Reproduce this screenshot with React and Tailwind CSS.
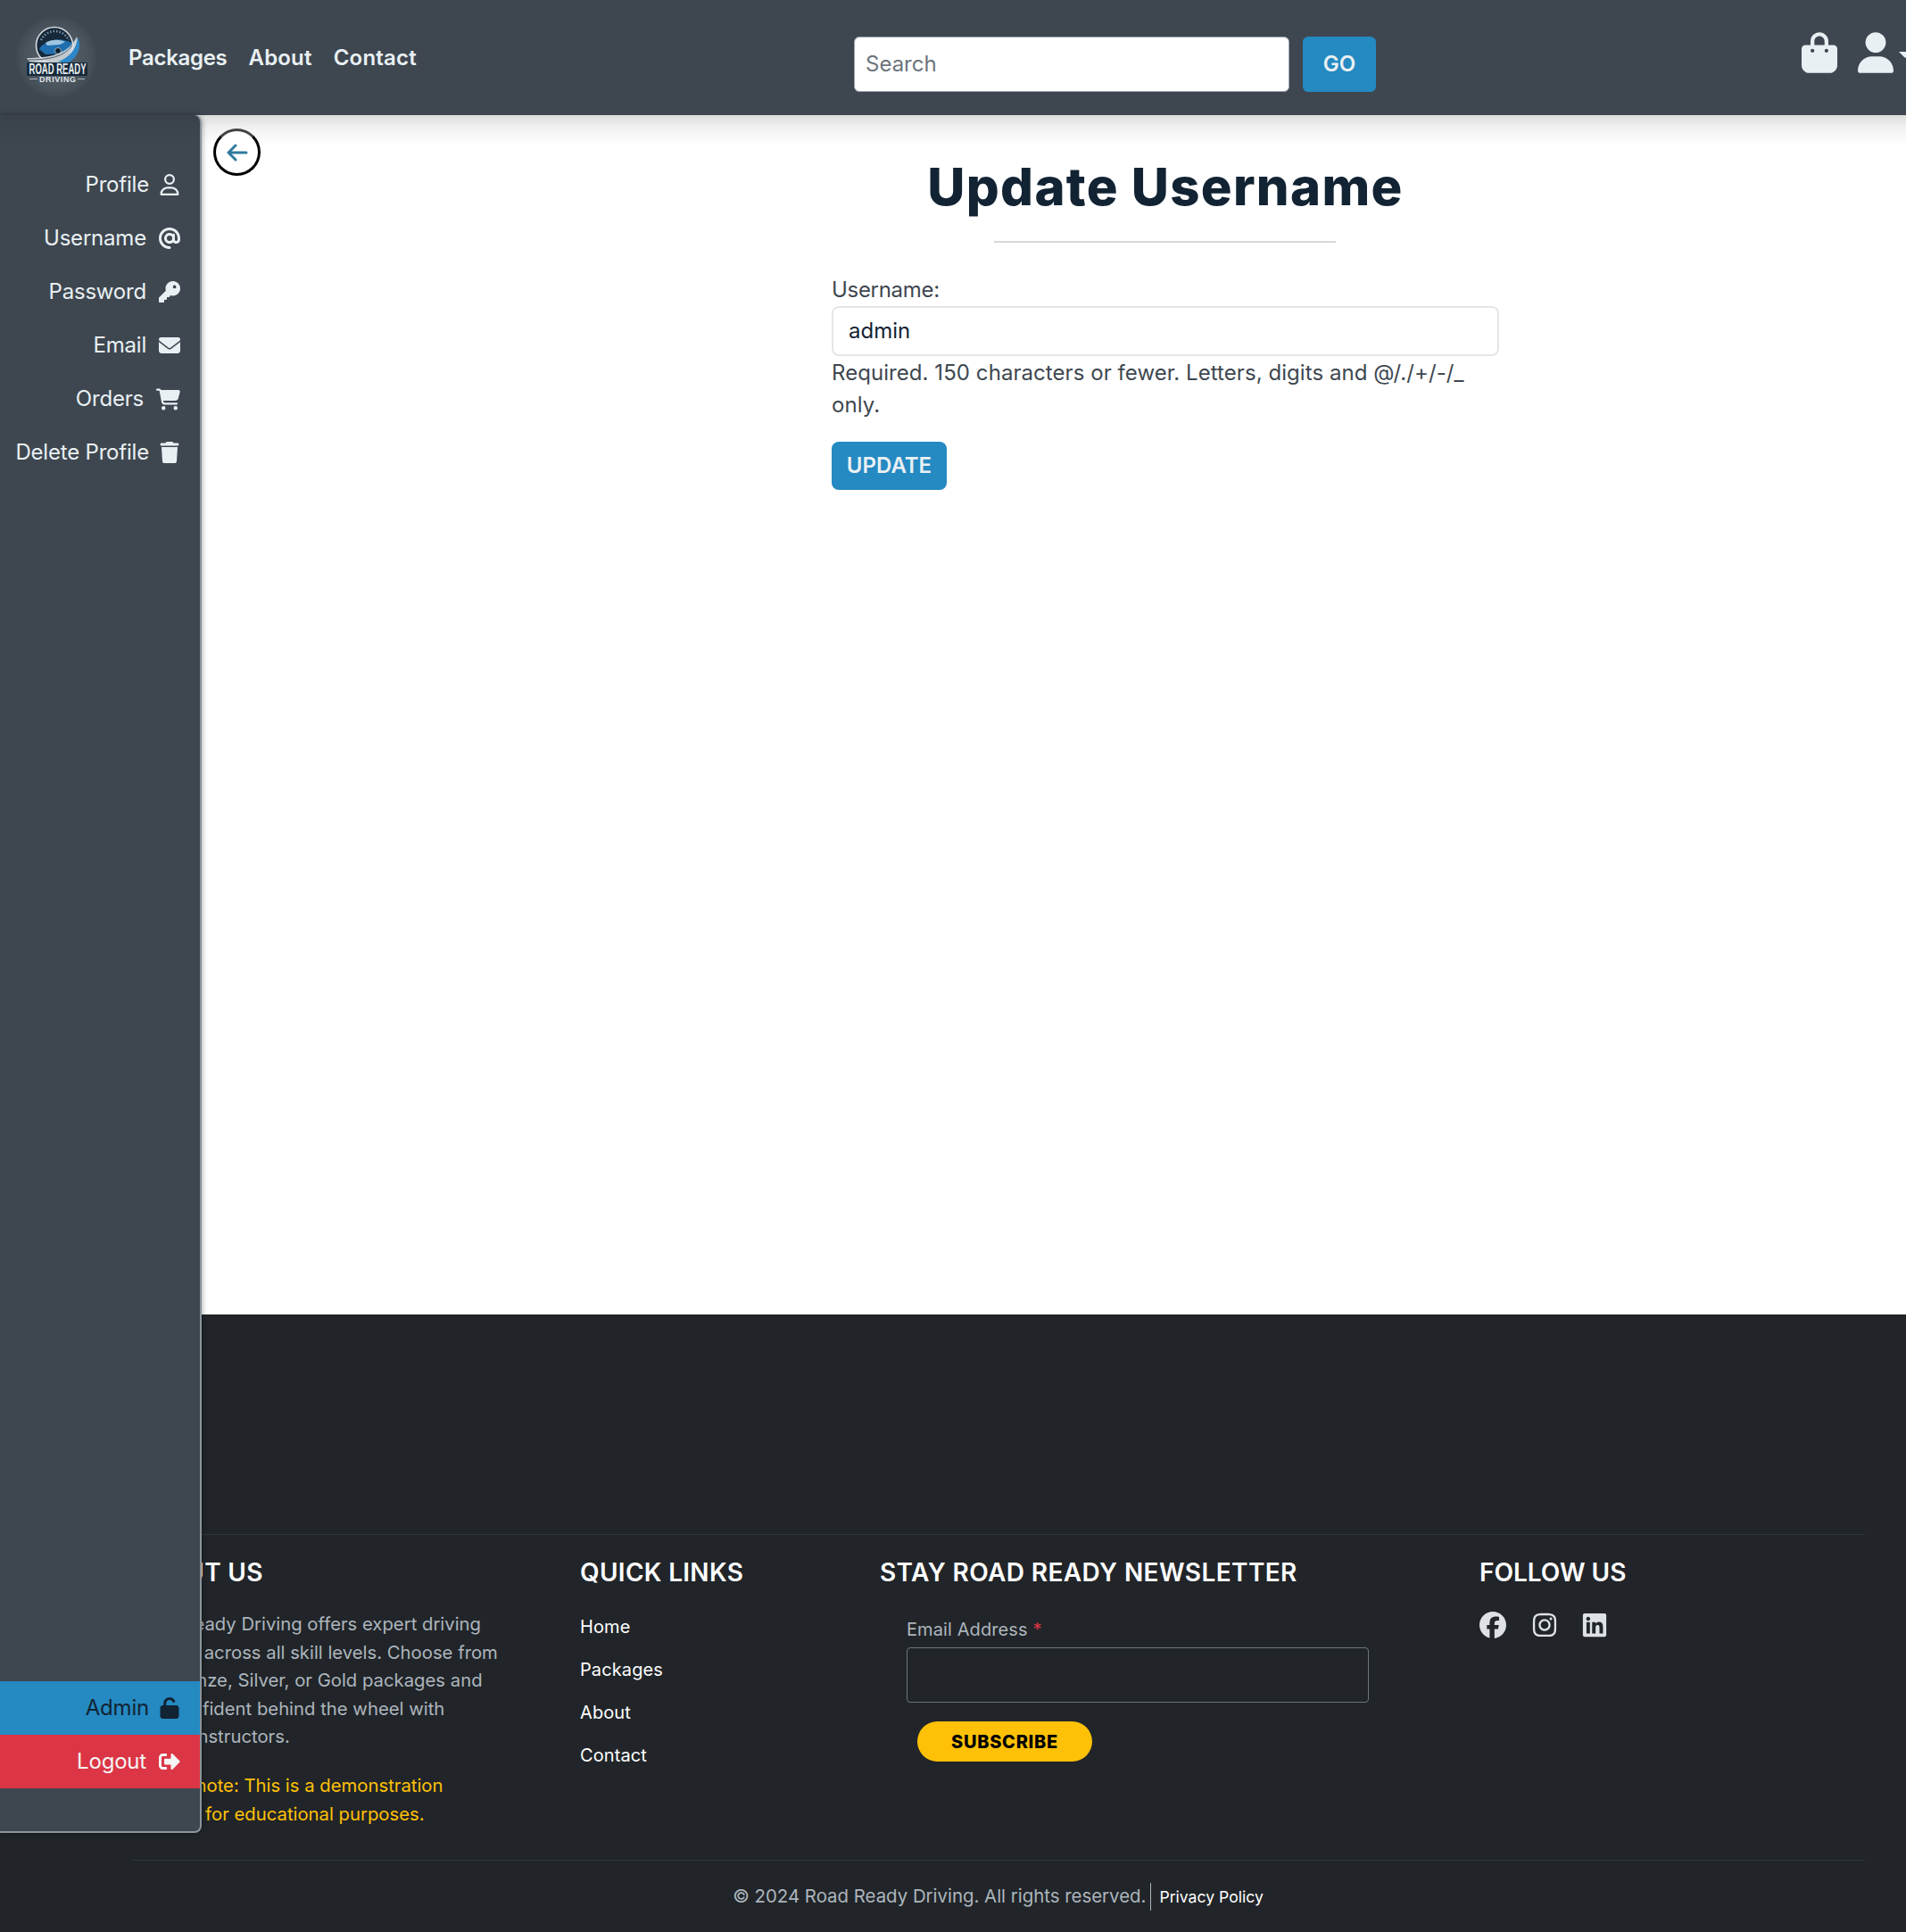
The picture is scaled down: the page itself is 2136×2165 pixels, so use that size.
import React from "react";
import { FaRegUser, FaAt, FaKey, FaEnvelope, FaCartShopping, FaTrash, FaUnlock, FaBagShopping, FaUser, FaFacebook, FaInstagram, FaLinkedin } from "react-icons/fa6";
import { FaSignOutAlt } from "react-icons/fa";

const font = { fontFamily: "Inter, 'Liberation Sans', sans-serif" };

function Logo() {
  return (
    <svg viewBox="0 0 100 100" className="w-[100px] h-[100px] block overflow-visible">
      <defs>
        <radialGradient id="halo" cx="50%" cy="50%" r="50%">
          <stop offset="0%" stopColor="#59626b" />
          <stop offset="75%" stopColor="#4a545d" />
          <stop offset="92%" stopColor="#434d56" />
          <stop offset="100%" stopColor="#3e4750" />
        </radialGradient>
      </defs>
      <circle cx="48" cy="49" r="46" fill="url(#halo)" />
      <circle cx="46" cy="36" r="20.5" fill="#16293a" stroke="#d5dce1" strokeWidth="1.6" />
      <path d="M31 30 A17 17 0 0 1 62 30" fill="none" stroke="#7f95a6" strokeWidth="2.5" strokeDasharray="1.5 2" />
      <path d="M29 40 C31 35 38 32 44 30 C52 28 60 31 66 33 L64 42 L58 45 L36 46 Z" fill="#1f6fb0" />
      <path d="M36 33 C42 29 52 29 58 32 L52 35 L38 36 Z" fill="#9fc6df" />
      <circle cx="50" cy="42" r="3.5" fill="#0f1f2d" stroke="#b9c8d2" strokeWidth="0.8" />
      <path d="M15 50 C40 50 62 46 71 26 C74 34 70 43 62 50 L50 57 L18 54 Z" fill="#dfe5e9" opacity="0.85" />
      <path d="M50 54 C62 50 71 40 72 27 C77 36 73 50 60 56 Z" fill="#2b87c9" />
      <path d="M17 52 C40 52 56 49 66 36" fill="none" stroke="#4f5a64" strokeWidth="1" />
      <rect x="15" y="55" width="68" height="15" rx="1" fill="#172a3b" />
      <text x="49.5" y="68.3" textAnchor="middle" fontSize="16" fontWeight="700" fill="#e8eef1" fontFamily="'Liberation Sans', sans-serif" textLength="64" lengthAdjust="spacingAndGlyphs">ROAD READY</text>
      <path d="M18 73.5 H27 M72 73.5 H80" stroke="#aab4bc" strokeWidth="1" />
      <text x="49.5" y="76.5" textAnchor="middle" fontSize="9" fontWeight="700" fill="#dfe5e9" fontFamily="'Liberation Sans', sans-serif" textLength="41">DRIVING</text>
    </svg>
  );
}

function SideItem({ label, icon: Icon, className = "", size = 24, gap = "gap-[14px]" }) {
  return (
    <div className={`h-[60px] flex items-center justify-end pr-[22px] text-[24px] tracking-[-0.2px] ${gap} ${className}`}>
      <span>{label}</span>
      <Icon size={size} />
    </div>
  );
}

export default function App() {
  return (
    <div style={font} className="relative w-[2136px] h-[2165px] overflow-hidden bg-white text-[#e9f0f3]">
      <header className="relative h-[129px] bg-[#3e4750] flex items-start">
        <div className="pt-[15px] pl-[15px] w-[144px] shrink-0"><Logo /></div>
        <nav className="flex gap-[24px] pt-[48px] text-[24px] font-semibold leading-[34px]">
          <span className="tracking-[-0.3px]">Packages</span>
          <span className="tracking-[0.2px]">About</span>
          <span className="tracking-[0.2px]">Contact</span>
        </nav>
        <div className="absolute left-[957px] top-[41px] flex gap-[15px]">
          <div className="w-[488px] h-[62px] bg-white border border-gray-400 rounded-md flex items-center px-3 text-[24px] text-[#6c757d]">Search</div>
          <div className="w-[82px] h-[62px] bg-[#2589c2] rounded-md flex items-center justify-center text-[24px] font-semibold text-[#e9f0f3]">GO</div>
        </div>
        <div className="absolute left-[2019px] top-[36px] flex items-end gap-[23px]">
          <FaBagShopping size={46} className="w-[40px]" />
          <FaUser size={46} className="w-[40px]" />
        </div>
        <div className="absolute left-[2128px] top-[58px] w-0 h-0 border-t-[7px] border-x-[7px] border-x-transparent border-t-[#e9f0f3]" />
      </header>

      <main className="h-[1344px] relative bg-[linear-gradient(to_bottom,#dcdcdc_0px,#f1f1f1_14px,#ffffff_34px)] pl-[225px] text-[#3e4750]">
        <div className="absolute left-[239px] top-[15px] w-[53px] h-[53px] rounded-full border-[3px] border-black border-t-[#444444] bg-white flex items-center justify-center">
          <svg width="24" height="20" viewBox="0 0 24 20" fill="none" stroke="#2f7a9c" strokeWidth="3" strokeLinecap="round" strokeLinejoin="round">
            <path d="M2 10 H22 M10 2 L2 10 L10 18" />
          </svg>
        </div>
        <div className="w-[748px] ml-[707px] pt-[45px]">
          <h1 className="text-center text-[58px] font-extrabold tracking-[1.3px] leading-[70px] text-[#122333]">Update Username</h1>
          <div className="w-[383px] ml-[182px] mt-[26px] border-t-2 border-[#d6d8da]" />
          <label className="block mt-[35px] text-[24px] leading-[36px] tracking-[-0.3px]">Username:</label>
          <div className="h-[56px] border-2 border-[#e4e6e8] rounded-lg flex items-center px-[17px] text-[24px] text-[#122333]">admin</div>
          <p className="text-[24px] leading-[36px] mt-[1px] w-[720px] tracking-[0.06px]">Required. 150 characters or fewer. Letters, digits and @/./+/-/_ only.</p>
          <div className="mt-[23px] w-[129px] h-[54px] bg-[#2589c2] rounded-lg flex items-center justify-center text-[24px] font-semibold text-[#e9f0f3]">UPDATE</div>
        </div>
      </main>

      <footer className="h-[692px] bg-[#212529] pt-[246px]">
        <div className="ml-[225px] mr-[46px] border-t border-[#31363b]" />
        <div className="flex pl-[147px] pt-[24px] h-[364px]">
          <div className="w-[503px] shrink-0">
            <h3 className="text-[28px] font-semibold leading-[36px] tracking-[0.3px] text-white">ABOUT US</h3>
            <p className="mt-[24px] ml-[3px] whitespace-nowrap text-[20.3px] leading-[31.5px] text-[#adb5bd]">
              Road Ready Driving offers expert driving<br />
              lessons across all skill levels. Choose from<br />
              our Bronze, Silver, or Gold packages and<br />
              feel confident behind the wheel with<br />
              skilled instructors.
            </p>
            <p className="mt-[23px] ml-[3px] whitespace-nowrap text-[20.3px] leading-[32px] text-[#ffc107]">
              Please note: This is a demonstration<br />
              website for educational purposes.
            </p>
          </div>
          <div className="w-[336px] shrink-0">
            <h3 className="text-[28px] font-semibold leading-[36px] tracking-[0.3px] text-white">QUICK LINKS</h3>
            <ul className="mt-[28px] text-[20px] leading-[30px] tracking-[0.1px] text-white flex flex-col gap-[18px]">
              <li>Home</li><li>Packages</li><li>About</li><li>Contact</li>
            </ul>
          </div>
          <div className="w-[672px] shrink-0">
            <h3 className="text-[28px] font-semibold leading-[36px] tracking-[0.4px] text-white">STAY ROAD READY NEWSLETTER</h3>
            <div className="ml-[30px] mt-[31px] text-[20px] leading-[30px] tracking-[0.1px] text-[#adb5bd]">Email Address <span className="text-[#dc3545]">*</span></div>
            <div className="ml-[30px] mt-[5px] w-[518px] h-[62px] border border-[#6c757d] rounded" />
            <div className="ml-[42px] mt-[21px] w-[196px] h-[45px] rounded-full bg-[#ffc107] flex items-center justify-center text-[20px] font-extrabold tracking-[0.7px] text-black">SUBSCRIBE</div>
          </div>
          <div>
            <h3 className="text-[28px] font-semibold leading-[36px] text-white">FOLLOW US</h3>
            <div className="mt-[26px] flex gap-[28px] text-[#dee2e6]">
              <FaFacebook size={30} /><FaInstagram size={30} /><FaLinkedin size={30} className="-ml-[2px]" />
            </div>
          </div>
        </div>
        <div className="ml-[147px] mr-[46px] border-t border-[#31363b]" />
        <div className="flex justify-center items-center pt-[25px] pl-[147px] pr-[46px] text-[20.4px] text-[#adb5bd]">
          <span className="pr-[5px] border-r border-[#adb5bd]">© 2024 Road Ready Driving. All rights reserved.</span>
          <span className="pl-[9px] pt-[2px] text-[17.6px] text-white">Privacy Policy</span>
        </div>
      </footer>

      <aside className="absolute left-0 top-[129px] w-[226px] h-[1925px] bg-[linear-gradient(to_bottom,#39424a_0px,#3e4750_30px)] border-r-2 border-b-2 border-[#8b949b] rounded-r-lg shadow-[0_0_6px_rgba(0,0,0,0.4)] flex flex-col">
        <div className="pt-[48px]">
          <SideItem label="Profile" icon={FaRegUser} gap="gap-[11px]" />
          <SideItem label="Username" icon={FaAt} />
          <SideItem label="Password" icon={FaKey} />
          <SideItem label="Email" icon={FaEnvelope} />
          <SideItem label="Orders" icon={FaCartShopping} size={27} />
          <SideItem label="Delete Profile" icon={FaTrash} gap="gap-[11px]" />
        </div>
        <div className="mt-auto mb-[48px]">
          <SideItem label="Admin" icon={FaUnlock} gap="gap-[11px]" className="bg-[#2589c2] text-[#122333]" />
          <SideItem label="Logout" icon={FaSignOutAlt} className="bg-[#dc3545] text-[#f5f5f5]" />
        </div>
      </aside>
    </div>
  );
}
